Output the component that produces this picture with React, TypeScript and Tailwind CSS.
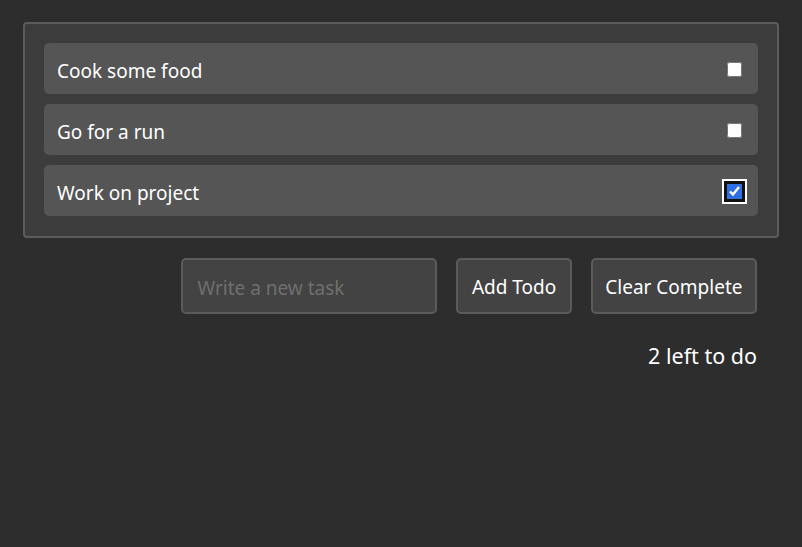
import React, { useState } from "react";

export default function App() {
  const [todos, setTodos] = useState([
    { id: 1, text: "Cook some food", done: false },
    { id: 2, text: "Go for a run", done: false },
    { id: 3, text: "Work on project", done: true },
  ]);
  const left = todos.filter((t) => !t.done).length;
  return (
    <div
      className="min-h-[547px] w-full bg-[#2d2d2d] text-white px-[23px] pt-[22px]"
      style={{ fontFamily: '"Noto Sans", "Open Sans", sans-serif' }}
    >
      <div className="flex flex-col gap-[10px] rounded-[4px] border-2 border-[#5b5b5b] bg-[#3c3c3c] px-[19px] pt-[19px] pb-[20px]">
        {todos.map((t) => (
          <div
            key={t.id}
            className="flex h-[51px] items-center justify-between rounded-[5px] bg-[#555555] pl-[13px] pr-[16px]"
          >
            <span className="pt-[5px] text-[19px]">{t.text}</span>
            <input
              type="checkbox"
              checked={t.done}
              onChange={() =>
                setTodos(todos.map((x) => (x.id === t.id ? { ...x, done: !x.done } : x)))
              }
              className={
                "m-0 mt-[2px] h-[15px] w-[15px] accent-[#2f6fe6] " +
                (t.done ? "rounded-[3px] shadow-[0_0_0_3px_#111111,0_0_0_5px_#ffffff]" : "")
              }
            />
          </div>
        ))}
      </div>
      <div className="mt-[20px] flex justify-end gap-[19px] pr-[22px]">
        <input
          placeholder="Write a new task"
          className="h-[56px] w-[256px] rounded-[5px] border-2 border-[#5b5b5b] bg-[#434343] px-[14px] pt-[3px] text-[19px] text-white placeholder-[#6f6f6f] outline-none"
        />
        <button className="h-[56px] rounded-[5px] border-2 border-[#5b5b5b] bg-[#434343] px-[13.5px] pt-[3px] text-[19px] text-white">
          Add Todo
        </button>
        <button className="h-[56px] rounded-[5px] border-2 border-[#5b5b5b] bg-[#434343] px-[12.5px] pt-[3px] text-[19px] text-white">
          Clear Complete
        </button>
      </div>
      <div className="mt-[26px] pr-[22px] text-right text-[21.5px]">{left} left to do</div>
    </div>
  );
}
